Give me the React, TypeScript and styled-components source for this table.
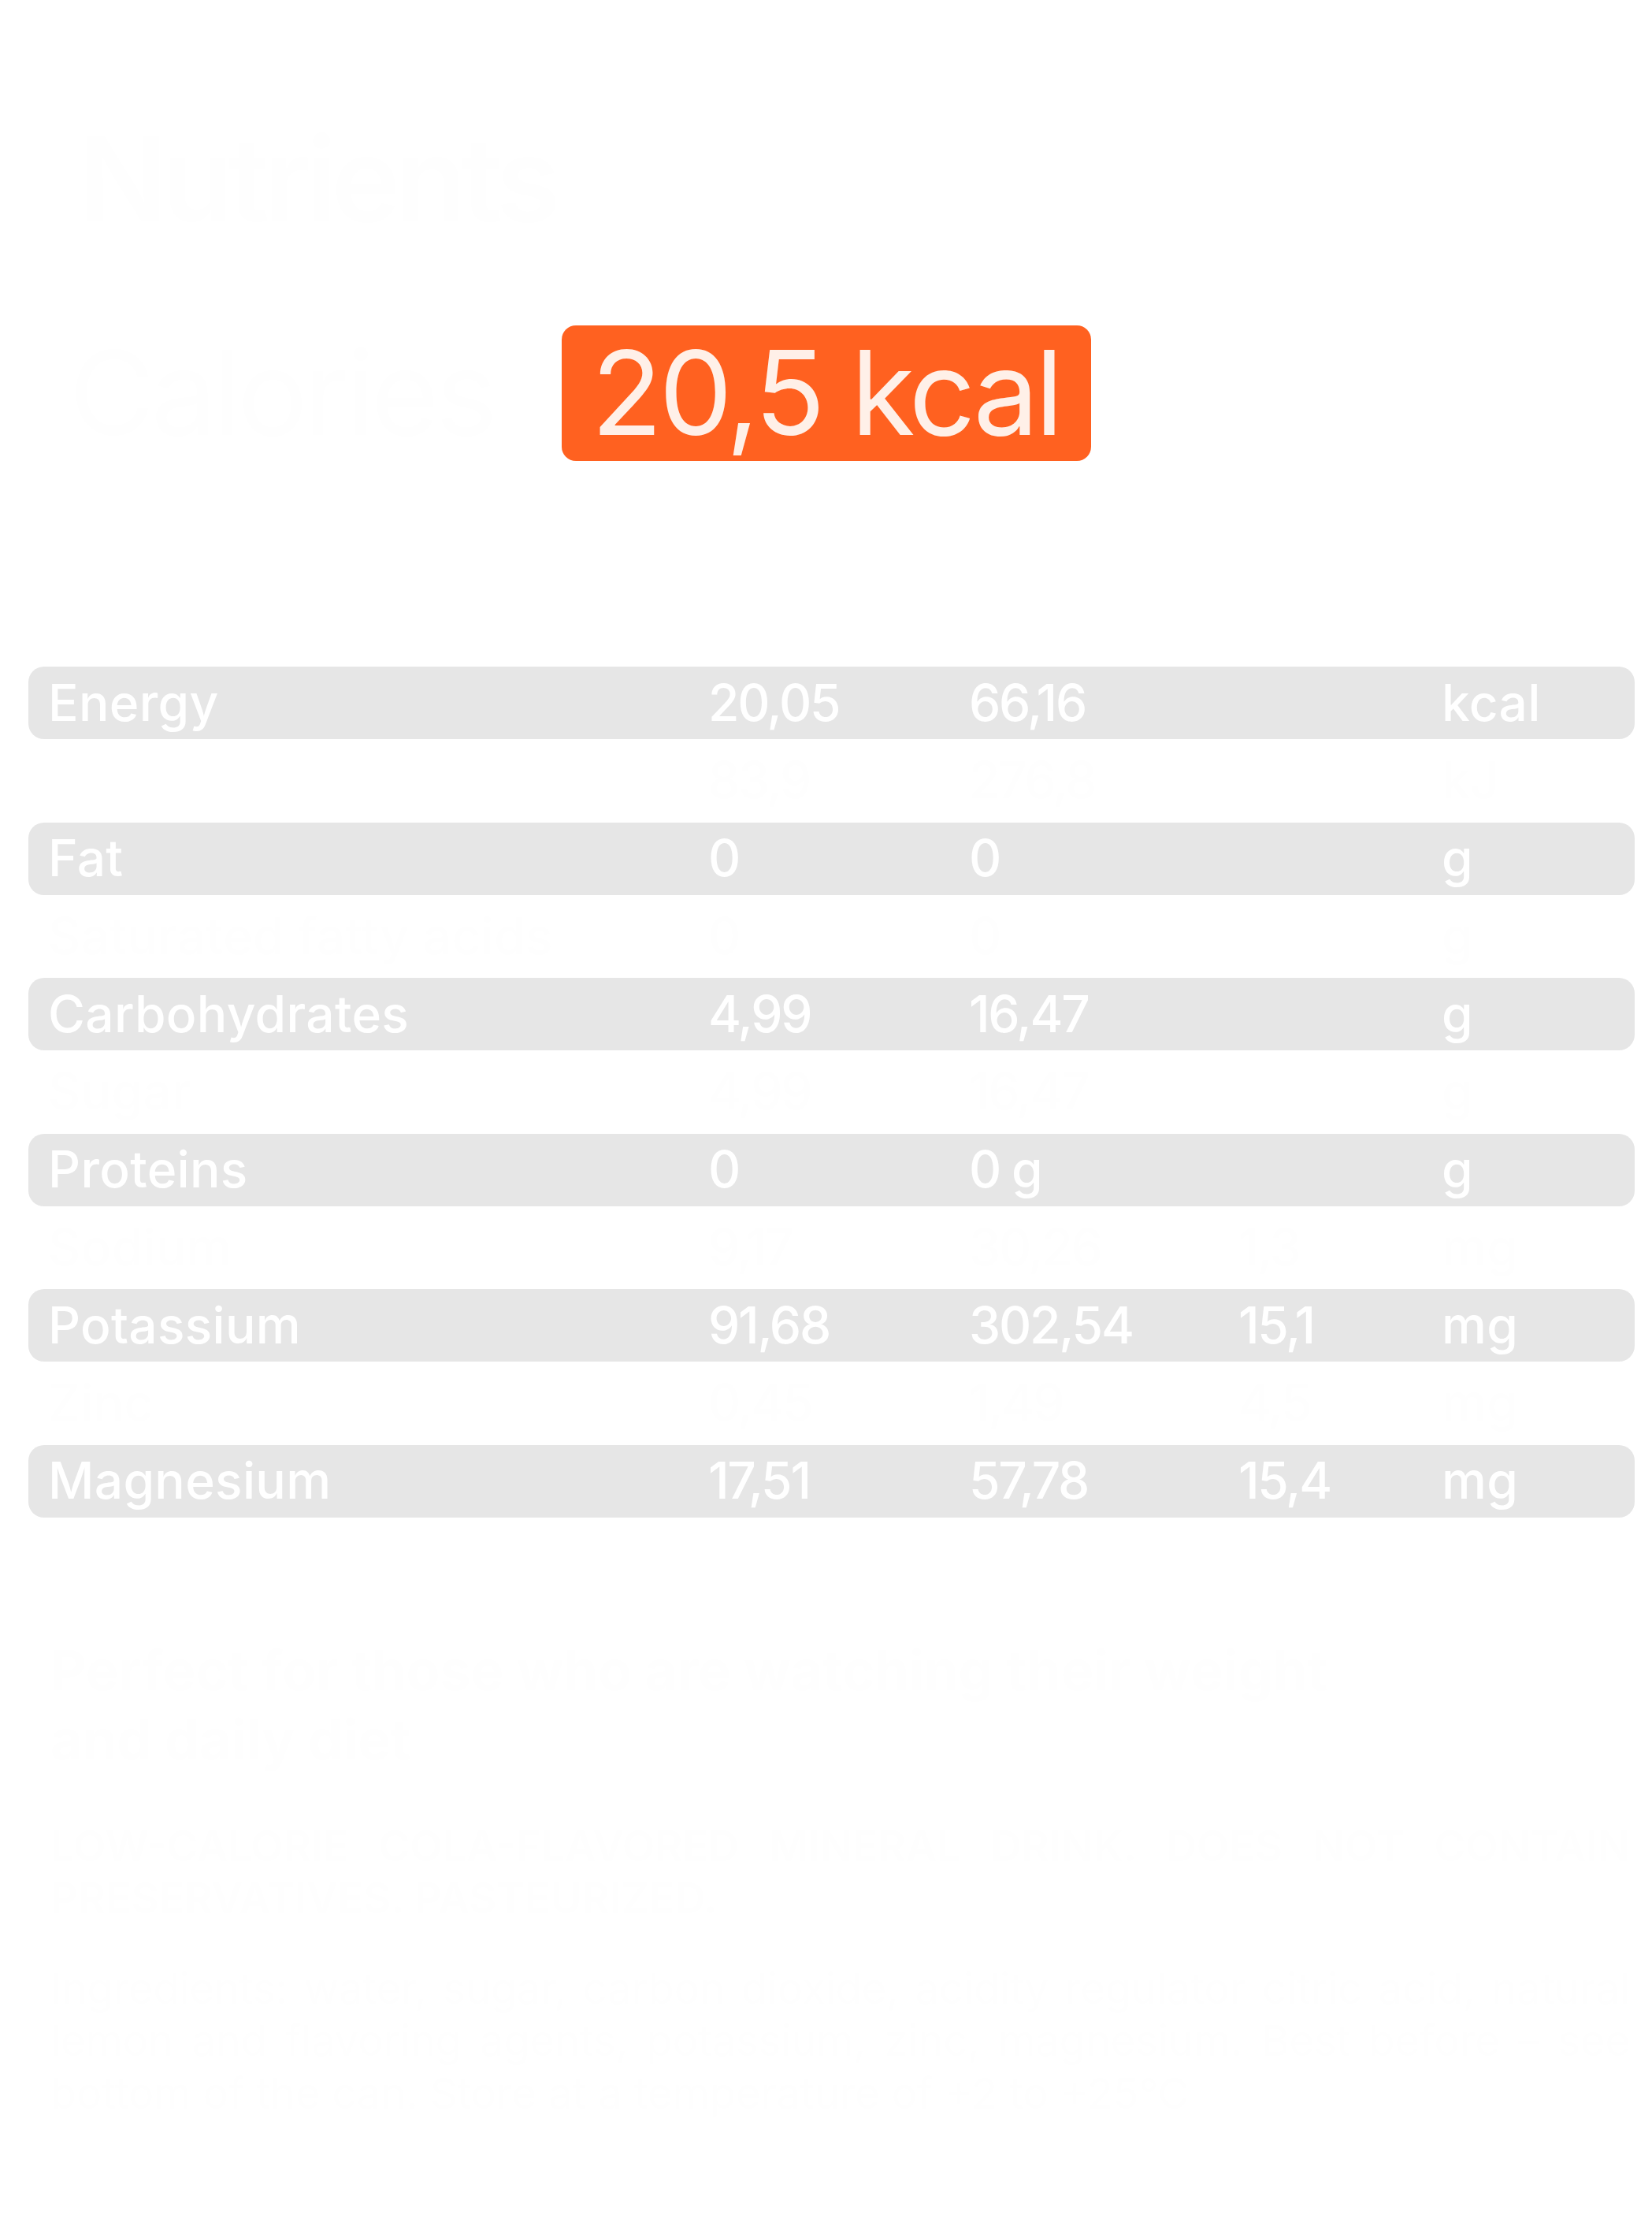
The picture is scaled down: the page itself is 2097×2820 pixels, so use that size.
import React from 'react'
import styled, { createGlobalStyle } from 'styled-components'

const GlobalStyles = createGlobalStyle`
  html, body {
    margin: 0;
    padding: 0;
    background: #ffffff;
  }
  body {
    font-family: Inter, "Noto Sans", "Liberation Sans", sans-serif;
  }
`

const FAINT = '#fefefe'

const Page = styled.div`
  width: 2097px;
  min-height: 2820px;
  box-sizing: border-box;
  padding: 139px 22px 0 36px;
`

const Title = styled.h1`
  margin: 0;
  padding-left: 64px;
  font-size: 148px;
  line-height: 178px;
  font-weight: 600;
  letter-spacing: -0.045em;
  color: ${FAINT};
`

const CaloriesLine = styled.h2`
  margin: 93px 0 0;
  padding-left: 52px;
  font-size: 148px;
  line-height: 178px;
  font-weight: 400;
  letter-spacing: -0.03em;
  color: ${FAINT};
`

const Badge = styled.span`
  display: inline-block;
  margin-left: 86px;
  padding: 0 40px 0 38px;
  line-height: 172px;
  border-radius: 18px;
  background: #ff6120;
  color: #fff0e8;
`

const Table = styled.div`
  margin-top: 258px;
  display: flex;
  flex-direction: column;
`

const Row = styled.div<{ $sub?: boolean }>`
  display: grid;
  grid-template-columns: 838px 331px 342px 258px 1fr;
  align-items: center;
  height: ${(p) => (p.$sub ? 105.5 : 92)}px;
  padding-left: 25px;
  border-radius: 20px;
  background: ${(p) => (p.$sub ? 'transparent' : '#e6e6e6')};
  color: ${(p) => (p.$sub ? FAINT : '#ffffff')};
  font-size: 64px;
  font-weight: 500;
  line-height: 1.2;
  white-space: nowrap;
`

const Cell = styled.span<{ $num?: boolean }>`
  letter-spacing: ${(p) => (p.$num ? '-0.035em' : '0.005em')};
`

const Heading = styled.h3`
  margin: 150px 0 0;
  padding-left: 28px;
  font-size: 70px;
  line-height: 88px;
  font-weight: 700;
  color: ${FAINT};
`

const Paragraph = styled.div<{ $upper?: boolean }>`
  margin-top: ${(p) => (p.$upper ? 58 : 48)}px;
  padding-left: 28px;
  padding-right: 6px;
  font-size: 54px;
  line-height: 66.5px;
  font-weight: ${(p) => (p.$upper ? 600 : 400)};
  text-transform: ${(p) => (p.$upper ? 'uppercase' : 'none')};
  color: ${FAINT};
`

const Line = styled.div<{ $justify?: boolean }>`
  text-align: ${(p) => (p.$justify ? 'justify' : 'left')};
  text-align-last: ${(p) => (p.$justify ? 'justify' : 'left')};
  white-space: nowrap;
`

type Item = {
  name: string
  values: [string, string, string, string]
  sub?: { name: string; values: [string, string, string, string] }
}

const items: Item[] = [
  {
    name: 'Energy',
    values: ['20,05', '66,16', '', 'kcal'],
    sub: { name: '', values: ['83,9', '276,8', '', 'kJ'] }
  },
  {
    name: 'Fat',
    values: ['0', '0', '', 'g'],
    sub: { name: 'Saturated fatty acids', values: ['0', '0', '', 'g'] }
  },
  {
    name: 'Carbohydrates',
    values: ['4,99', '16,47', '', 'g'],
    sub: { name: 'Sugar', values: ['4,99', '16,47', '', 'g'] }
  },
  {
    name: 'Proteins',
    values: ['0', '0 g', '', 'g'],
    sub: { name: 'Sodium', values: ['9,17', '30,26', '1,3', 'mg'] }
  },
  {
    name: 'Potassium',
    values: ['91,68', '302,54', '15,1', 'mg'],
    sub: { name: 'Zinc', values: ['0,45', '1,49', '4,5', 'mg'] }
  },
  {
    name: 'Magnesium',
    values: ['17,51', '57,78', '15,4', 'mg']
  }
]

const NutrientRow = ({ item }: { item: Item }) => (
  <>
    <Row>
      <Cell>{item.name}</Cell>
      {item.values.map((v, i) => (
        <Cell key={i} $num={i < 3}>
          {v}
        </Cell>
      ))}
    </Row>
    {item.sub && (
      <Row $sub>
        <Cell>{item.sub.name}</Cell>
        {item.sub.values.map((v, i) => (
          <Cell key={i} $num={i < 3}>
            {v}
          </Cell>
        ))}
      </Row>
    )}
  </>
)

const App = () => {
  return (
    <Page>
      <GlobalStyles />
      <Title>Nutrients</Title>
      <CaloriesLine>
        Calories<Badge>20,5 kcal</Badge>
      </CaloriesLine>

      <Table>
        {items.map((item) => (
          <NutrientRow key={item.name} item={item} />
        ))}
      </Table>

      <Heading>
        Perfect for those who are watching their weight
        <br />
        and daily diet
      </Heading>

      <Paragraph $upper>
        <Line $justify>Low-calorie cola-flavored mineral drink. Does not contain</Line>
        <Line>Preservatives. Pasteurized.</Line>
      </Paragraph>

      <Paragraph>
        <Line $justify>
          Ingredients: water, sugar, carbon dioxide, acidity regulator citric acid, natural
        </Line>
        <Line $justify>
          lemon and flavoring agents, potassium, zinc, magnesium. Best before – see
        </Line>
        <Line>bottom of the can. Store at a temperature of +2 to +25°C</Line>
      </Paragraph>
    </Page>
  )
}

export default App
